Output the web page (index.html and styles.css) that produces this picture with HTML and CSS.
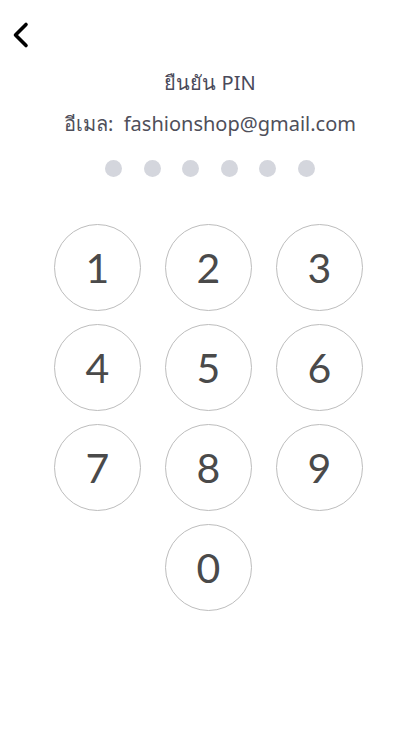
FILE: index.html
```html
<!DOCTYPE html>
<html lang="th">
<head>
    <meta charset="UTF-8">
    <title>ยืนยัน PIN</title>
    <link rel="stylesheet" href="styles.css">
</head>
<body>
    <div class="header">
        <button class="back" aria-label="back">
            <svg width="28" height="28" viewBox="0 0 28 28">
                <path d="M20 3.5 L9.5 14 L20 24.5" fill="none" stroke="#000" stroke-width="3.6" stroke-linecap="round" stroke-linejoin="round"/>
            </svg>
        </button>
    </div>
    <div class="content">
        <h1 class="title">ยืนยัน PIN</h1>
        <p class="email">อีเมล:&nbsp; fashionshop@gmail.com</p>
        <div class="dots">
            <span></span><span></span><span></span><span></span><span></span><span></span>
        </div>
        <div class="keypad">
            <button class="key">1</button>
            <button class="key">2</button>
            <button class="key">3</button>
            <button class="key">4</button>
            <button class="key">5</button>
            <button class="key">6</button>
            <button class="key">7</button>
            <button class="key">8</button>
            <button class="key">9</button>
            <button class="key zero">0</button>
        </div>
    </div>
</body>
</html>
```

FILE: styles.css
```css
body {
    margin: 0;
    background-color: #fff;
    font-family: "Noto Sans", "Open Sans", sans-serif;
    color: #4a4a55;
}
.header {
    height: 60px;
    padding: 21px 0 0 6px;
    box-sizing: border-box;
}
.back {
    background: none;
    border: none;
    padding: 0;
    width: 28px;
    height: 28px;
    cursor: pointer;
}
.back svg {
    display: block;
}
.content {
    display: flex;
    flex-direction: column;
    align-items: center;
}
.title {
    margin: 10px 0 0;
    font-size: 20px;
    line-height: 26px;
    font-weight: 400;
    color: #4a4a5a;
}
.email {
    margin: 15px 0 0;
    font-size: 20px;
    line-height: 26px;
    color: #4f4f5a;
}
.dots {
    display: flex;
    gap: 21.5px;
    margin-top: 23px;
}
.dots span {
    width: 17px;
    height: 17px;
    border-radius: 50%;
    background-color: #d4d6dd;
}
.keypad {
    display: grid;
    grid-template-columns: repeat(3, 87px);
    column-gap: 24px;
    row-gap: 13px;
    margin: 47px 3px 0 0;
}
.key {
    width: 87px;
    height: 87px;
    border-radius: 50%;
    border: 1px solid #bdbdbd;
    background: #fff;
    font-family: Lato, "Noto Sans", sans-serif;
    font-weight: 400;
    font-size: 41px;
    color: #4a4a4a;
    padding: 0;
    cursor: pointer;
}
.zero {
    grid-column: 2;
}
```
